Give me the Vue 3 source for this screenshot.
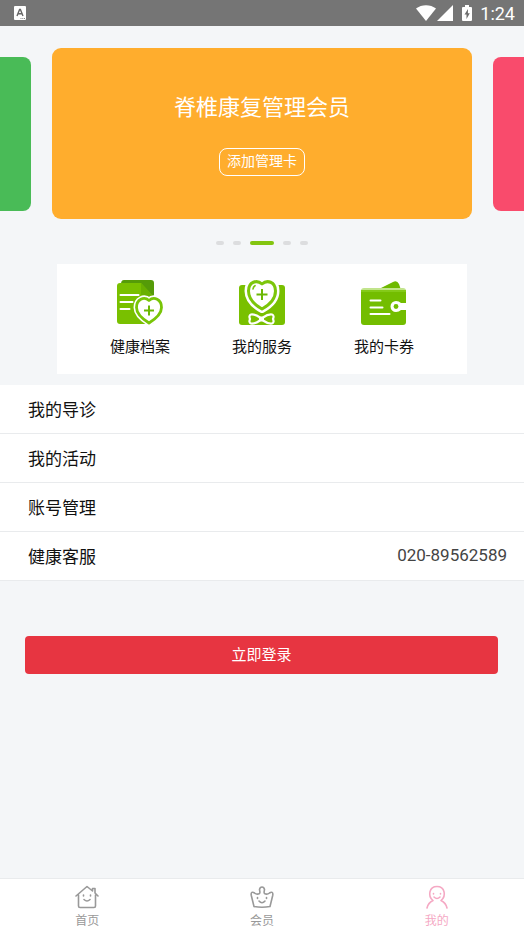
<script setup>
const services = [
  { name: '健康档案', icon: 'file' },
  { name: '我的服务', icon: 'service' },
  { name: '我的卡券', icon: 'wallet' },
]
const rows = [
  { name: '我的导诊' },
  { name: '我的活动' },
  { name: '账号管理' },
  { name: '健康客服', value: '020-89562589' },
]
const tabs = [
  { name: '首页', icon: 'home' },
  { name: '会员', icon: 'crown' },
  { name: '我的', icon: 'user', active: true },
]
const slides = [0, 1, 2, 3, 4]
const current = 2
</script>

<template>
  <div class="page">
    <header class="status">
      <svg class="ime" viewBox="0 0 12 14" aria-hidden="true">
        <rect width="12" height="14" rx="1" fill="#fff" />
        <path d="M3 10 5.6 3.5h.8L9 10M4 7.7h4" fill="none" stroke="#666" stroke-width="1.4" />
        <path d="M6.5 12.5h1M8.3 12.5h1M10 12.5h1" stroke="#888" stroke-width="1" />
      </svg>
      <div class="signals">
        <svg class="wifi" viewBox="0 0 20 16" aria-hidden="true">
          <path d="M0 3.6C5.5-.9 14.5-.9 20 3.6L10 16Z" fill="#fff" />
        </svg>
        <svg class="cell" viewBox="0 0 16 16" aria-hidden="true">
          <path d="M16 0v16H0Z" fill="#fff" />
        </svg>
        <svg class="battery" viewBox="0 0 10 16" aria-hidden="true">
          <path d="M3 0h4v2h2q1 0 1 1v12q0 1-1 1H1q-1 0-1-1V3q0-1 1-1h2Z" fill="#fff" />
          <path d="M6 4 2.500 9.500h2V14L7.800 8.200H5.900Z" fill="#6c6c6c" />
        </svg>
        <span class="clock">1:24</span>
      </div>
    </header>

    <main class="content">
      <section class="carousel">
        <div class="side green"></div>
        <article class="card">
          <h1>脊椎康复管理会员</h1>
          <button type="button" class="add">添加管理卡</button>
        </article>
        <div class="side pink"></div>
      </section>
      <div class="dots">
        <span v-for="s in slides" :key="s" :class="{ on: s === current }"></span>
      </div>

      <nav class="services">
        <a v-for="s in services" :key="s.name" href="#">
          <svg v-if="s.icon === 'file'" viewBox="0 0 48 48" aria-hidden="true">
            <path d="M8 1h27q3 0 3 3v16H26L5 5Q5 1 8 1Z" fill="#559b08" />
            <path d="M4 4h21l13 14v24q0 3-3 3H4q-3 0-3-3V7q0-3 3-3Z" fill="#79c000" />
            <path d="M25 4v11q0 3 3 3h10Z" fill="#69b000" />
            <path d="M4.500 16h18M4.500 23h12M4.500 30h9" stroke="#fff" stroke-width="2" stroke-linecap="round" />
            <path d="M33 44C25 39 20.500 34.500 20.500 28.500C20.500 20.500 28 17 33 21.500C38 17 45.500 20.500 45.500 28.500C45.500 34.500 41 39 33 44Z" fill="#fff" stroke="#fff" stroke-width="6" stroke-linejoin="round" />
            <path d="M33 44C25 39 20.500 34.500 20.500 28.500C20.500 20.500 28 17 33 21.500C38 17 45.500 20.500 45.500 28.500C45.500 34.500 41 39 33 44Z" fill="#fff" stroke="#79c507" stroke-width="2.800" stroke-linejoin="round" />
            <path d="M28 31.500h10M33 26.500v10" stroke="#6cb804" stroke-width="2" />
          </svg>
          <svg v-else-if="s.icon === 'service'" viewBox="0 0 48 48" aria-hidden="true">
            <path d="M4 6h40q3 0 3 3v34q0 3-3 3H4q-3 0-3-3V9q0-3 3-3Z" fill="#79c000" />
            <path d="M24 30C15 25 10.500 19 10.500 12C10.500 2.500 19 .5 24 5C29 .5 37.500 2.500 37.500 12C37.500 19 33 25 24 30Z" fill="#fff" stroke="#fff" stroke-width="8" stroke-linejoin="round" />
            <path d="M24 30C15 25 10.500 19 10.500 12C10.500 2.500 19 .5 24 5C29 .5 37.500 2.500 37.500 12C37.500 19 33 25 24 30Z" fill="#fff" stroke="#7cc60a" stroke-width="3" stroke-linejoin="round" />
            <path d="M18.500 15.500h11M24 10v11" stroke="#6cb804" stroke-width="2" />
            <path d="M15 10q.3-2.300 2-3.300" fill="none" stroke="#7cc60a" stroke-width="1.700" stroke-linecap="round" />
            <path d="M22 38.500Q17 35 13 35.500Q10.500 36.500 12 40Q10.500 43.500 13 44.500Q17 45 22 41.500ZM25 38.500Q30 35 34 35.500Q36.500 36.500 35 40Q36.500 43.500 34 44.500Q30 45 25 41.500Z" fill="#79c000" stroke="#fff" stroke-width="2.200" stroke-linejoin="round" />
            <rect x="21" y="37.500" width="5" height="5" rx="2" fill="#fff" />
          </svg>
          <svg v-else viewBox="0 0 48 48" aria-hidden="true">
            <path d="M20 9.500 33 3q4-2 6 2l1.500 4.500Z" fill="#6eb900" />
            <path d="M4 10h39q3 0 3 3v30q0 3-3 3H4q-3 0-3-3V13q0-3 3-3Z" fill="#73bd00" />
            <path d="M1 13V12q0-3 3-3h39q3 0 3 3v1Z" fill="#84ca18" />
            <path d="M1 10h45" stroke="#fff" stroke-width="1" />
            <path d="M10.500 21.500h10M10.500 28.500h12M10.500 35h19" stroke="#fff" stroke-width="2" stroke-linecap="round" />
            <path d="M47 24h-6q-2-2-5-2a5.500 5.500 0 0 0 0 11q3 0 5-2h6Z" fill="#fff" />
            <circle cx="36" cy="27.500" r="2.400" fill="#73bd00" />
          </svg>
          <span>{{ s.name }}</span>
        </a>
      </nav>

      <ul class="list">
        <li v-for="r in rows" :key="r.name">
          <a href="#">
            <span>{{ r.name }}</span>
            <span v-if="r.value" class="value">{{ r.value }}</span>
          </a>
        </li>
      </ul>

      <button type="button" class="login">立即登录</button>
    </main>

    <nav class="tabs">
      <a v-for="t in tabs" :key="t.name" href="#" :class="{ active: t.active }">
        <svg viewBox="0 0 24 24" fill="none" stroke="currentColor" stroke-width="1.600" stroke-linecap="round" stroke-linejoin="round" aria-hidden="true">
          <template v-if="t.icon === 'home'">
            <path d="M1 11 12 1.500 17.500 6V3.500H20V8l3 3M3.500 10v11q0 1.500 1.500 1.500h14q1.500 0 1.500-1.500V10" />
            <path d="M8.500 10v1M15.500 10v1M9 14.500q3 3 6 0" />
          </template>
          <template v-else-if="t.icon === 'crown'">
            <path d="M4 21.500 1.300 10.500C.6 7 2.500 6.500 4.500 8Q7 10 9.500 8.500C10.500 7.500 9.500 5.500 9.500 4.500Q10 2 12 2T14.500 4.500C14.500 5.500 13.500 7.500 14.500 8.500Q17 10 19.500 8C21.500 6.500 23.400 7 22.700 10.500L20 21.500Q12 23 4 21.500Z" />
            <path d="M7.500 12.500v1M16.500 12.500v1M9 16q3 3.500 6 0" />
          </template>
          <template v-else>
            <path d="M2 23Q3 18 8 15.500C2.500 11 4 1.500 12 1.500S21.500 11 16 15.500Q21 18 22 23" />
            <path d="M8.500 8.500v.500M15.500 8.500v.500M9 12q3 3 6 0" />
          </template>
        </svg>
        <span>{{ t.name }}</span>
      </a>
    </nav>
  </div>
</template>

<style>
body {
  margin: 0;
  background: #f4f6f8;
}
</style>

<style scoped>
.page {
  display: flex;
  flex-direction: column;
  min-height: 100vh;
  font-family: Roboto, "Noto Sans CJK SC", sans-serif;
  color: #111;
}
a {
  color: inherit;
  text-decoration: none;
}
button {
  font-family: inherit;
  color: #fff;
  cursor: pointer;
}
.status {
  display: flex;
  align-items: center;
  justify-content: space-between;
  height: 26px;
  padding: 0 9px 0 14px;
  background: #757575;
}
.ime {
  width: 12px;
  height: 14px;
}
.signals {
  display: flex;
  align-items: center;
}
.wifi {
  width: 20px;
  height: 16px;
}
.cell {
  width: 16px;
  height: 16px;
  margin: 0 9px 0 1px;
}
.battery {
  width: 10px;
  height: 16px;
}
.clock {
  margin-left: 8px;
  padding-top: 2px;
  color: #fff;
  font-size: 18px;
  line-height: 24px;
}
.content {
  flex: 1;
}
.carousel {
  display: flex;
  align-items: center;
  gap: 21px;
  padding-top: 22px;
}
.side {
  flex: 1;
  height: 154px;
}
.green {
  border-radius: 0 8px 8px 0;
  background: #49bb57;
}
.pink {
  border-radius: 8px 0 0 8px;
  background: #f94b6c;
}
.card {
  display: flex;
  flex: 0 0 80%;
  flex-direction: column;
  align-items: center;
  gap: 24px;
  box-sizing: border-box;
  height: 171px;
  padding-top: 44px;
  border-radius: 9px;
  background: #ffad2d;
  color: #fff;
}
h1 {
  margin: 0;
  font-size: 22px;
  font-weight: 400;
  line-height: 32px;
}
.add {
  height: 28px;
  padding: 0 7px 3px;
  border: 1px solid #fff;
  border-radius: 8px;
  background: transparent;
  font-size: 14px;
  line-height: 22px;
}
.dots {
  display: flex;
  justify-content: center;
  gap: 9px;
  padding: 22px 0 19px;
}
.dots span {
  width: 8px;
  height: 4px;
  border-radius: 2px;
  background: #dcdddf;
}
.dots .on {
  width: 24px;
  background: #83c510;
}
.services {
  display: flex;
  justify-content: center;
  gap: 62px;
  margin: 0 57px 11px;
  padding: 15px 0;
  background: #fff;
}
.services a {
  display: flex;
  flex-direction: column;
  align-items: center;
  gap: 9px;
  font-size: 15px;
  line-height: 23px;
}
.services svg {
  width: 48px;
  height: 48px;
}
.list {
  margin: 0;
  padding: 0;
  list-style: none;
}
.list a {
  display: flex;
  align-items: center;
  justify-content: space-between;
  height: 46px;
  padding: 0 17px 2px 28px;
  border-bottom: 1px solid #e9ebed;
  background: #fff;
  font-size: 17px;
}
.value {
  padding-bottom: 1px;
  color: #444;
}
.login {
  display: block;
  width: calc(100% - 51px);
  height: 38px;
  margin: 55px 26px 24px 25px;
  padding: 0 0 4px;
  border: 0;
  border-radius: 4px;
  background: #e73541;
  font-size: 15px;
}
.tabs {
  display: flex;
  height: 53px;
  border-top: 1px solid #e9ebed;
  background: #fff;
  color: #999;
}
.tabs a {
  display: flex;
  flex: 1;
  flex-direction: column;
  align-items: center;
  gap: 3px;
  padding-top: 6px;
  font-size: 12px;
  line-height: 18px;
}
.tabs svg {
  width: 24px;
  height: 24px;
}
.tabs .active {
  color: #f5a9c4;
}
</style>
